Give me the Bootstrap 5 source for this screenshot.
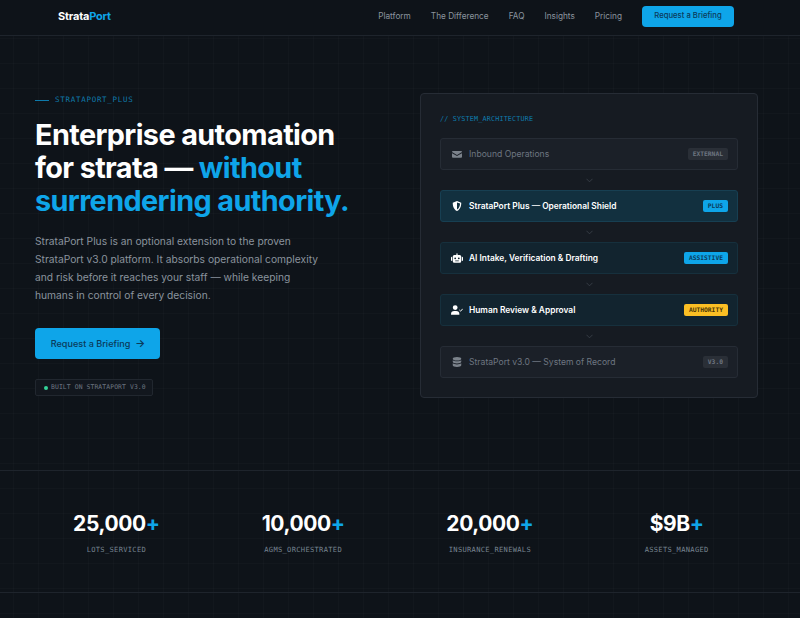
<!DOCTYPE html>
<html lang="en">
<head>
  <meta charset="UTF-8" />
  <meta name="viewport" content="width=device-width, initial-scale=1" />
  <title>StrataPort Plus</title>
  <link href="https://cdn.jsdelivr.net/npm/bootstrap@5.3.2/dist/css/bootstrap.min.css" rel="stylesheet" />
  <style>
    html, body { height: 100%; overflow: hidden; }
    body {
      font-family: 'Inter', sans-serif;
      color: #fff;
      background-color: #0e1319;
      background-image:
        linear-gradient(rgba(255,255,255,.016) 1px, transparent 1px),
        linear-gradient(90deg, rgba(255,255,255,.016) 1px, transparent 1px);
      background-size: 25px 25px;
      background-position: 13px 13px;
    }
    .mono { font-family: 'DejaVu Sans Mono', monospace; }
    /* nav */
    .top-nav { height: 36px; padding: 0 66px 3px 58px; border-bottom: 1px solid #1e242c; background: #0e1319; }
    .brand { font-size: 11px; font-weight: 700; color: #fff; letter-spacing: -.2px; }
    .accent { color: #0ea5e9; }
    .top-link { font-size: 8.25px; color: #8b949e; text-decoration: none; }
    .top-links { gap: 20px; }
    .btn-sky { background: #0ea5e9; color: #0b3a5a; border: 0; font-weight: 500; border-radius: 4px; }
    .btn-sky:hover { background: #0ea5e9; color: #0b3a5a; }
    .btn-nav { font-size: 7.7px; width: 92px; height: 21px; padding: 0; }
    /* hero */
    .hero-wrap { height: 434px; padding: 57px 42px 0 35px; gap: 62px; }
    .hero-left { width: 323px; flex-shrink: 0; }
    .eyebrow { font-size: 7.5px; letter-spacing: .72px; color: #0e7aab; height: 14px; }
    .eyebrow-rule { width: 14px; height: 1px; background: #0e7aab; margin-right: 6px; }
    .hero-title { font-size: 28.8px; line-height: 33px; font-weight: 700; letter-spacing: -.6px; margin: 11px 0 0; }
    .hero-copy { font-size: 10.25px; line-height: 18px; color: #8b949e; margin: 15px 0 0; width: 290px; }
    .btn-hero { font-size: 9.1px; width: 125px; height: 31px; margin-top: 24px; padding: 0 0 0 1px; }
    .btn-arrow { font-size: 10.5px; font-weight: 600; }
    .built-tag { margin-top: 20px; height: 17px; width: 118px; border: 1px solid #21272f; background: #12171e; border-radius: 2px; font-size: 6.4px; letter-spacing: .1px; color: #6e7681; padding-left: 8px; white-space: nowrap; }
    .dot-live { width: 4px; height: 4px; border-radius: 50%; background: #34d399; margin-right: 3px; flex-shrink: 0; }
    /* architecture card */
    .arch-card { width: 338px; height: 305px; background: #161b22; border: 1px solid #262c35; border-radius: 4px; padding: 20px 19px; }
    .arch-head { font-size: 6.8px; letter-spacing: .15px; color: #0e7aab; height: 10px; line-height: 10px; margin-bottom: 14px; }
    .arch-row { height: 32px; border-radius: 3px; padding: 0 9px 0 11px; font-size: 8.6px; border: 1px solid #262c35; background: #1b2028; color: #6e7681; }
    .arch-row.lit { background: #12303f; border-color: #173f52; color: #fff; font-weight: 600; font-size: 8.4px; }
    .arch-row.lit.soft { background: #12242f; border-color: #16303d; }
    .arch-row svg { width: 10px; height: 10px; margin-right: 7px; flex-shrink: 0; fill: currentColor; }
    .arch-row.dim svg { fill: #7b828b; }
    .arch-tag { margin-left: auto; font-size: 6.3px; font-weight: 700; padding: 0 5px; height: 12px; line-height: 12px; border-radius: 2px; }
    .tag-muted { background: #2a2f37; color: #6e7681; }
    .tag-sky { background: #0ea5e9; color: #0b3a5a; }
    .tag-gold { background: #fbbf24; color: #4a3505; }
    .arch-chev { height: 20px; color: #3a414a; }
    .arch-chev svg { width: 7px; height: 5px; }
    /* stats */
    .stat-band { height: 123px; padding: 0 30px 0 23px; border-top: 1px solid #1e242c; border-bottom: 1px solid #1e242c; }
    .stat-num { font-size: 21px; font-weight: 700; line-height: 28px; letter-spacing: -.4px; margin-top: 39px; }
    .stat-lab { font-size: 7.1px; letter-spacing: .3px; color: #768390; margin-top: 7px; }
  </style>
</head>
<body>
  <nav class="top-nav d-flex align-items-center justify-content-between">
    <a class="brand text-decoration-none" href="#">Strata<span class="accent">Port</span></a>
    <div class="d-flex align-items-center top-links">
      <a class="top-link" href="#">Platform</a>
      <a class="top-link" href="#">The Difference</a>
      <a class="top-link" href="#">FAQ</a>
      <a class="top-link" href="#">Insights</a>
      <a class="top-link" href="#">Pricing</a>
      <button class="btn btn-sky btn-nav">Request a Briefing</button>
    </div>
  </nav>

  <section class="hero-wrap d-flex">
    <div class="hero-left">
      <div class="eyebrow mono d-flex align-items-center"><span class="eyebrow-rule"></span>STRATAPORT_PLUS</div>
      <h1 class="hero-title">Enterprise automation<br>for strata — <span class="accent">without</span><br><span class="accent">surrendering authority.</span></h1>
      <p class="hero-copy">StrataPort Plus is an optional extension to the proven StrataPort v3.0 platform. It absorbs operational complexity and risk before it reaches your staff — while keeping humans in control of every decision.</p>
      <button class="btn btn-sky btn-hero d-block">Request a Briefing &nbsp;<span class="btn-arrow">→</span></button>
      <div class="built-tag mono d-flex align-items-center"><span class="dot-live"></span>BUILT ON STRATAPORT V3.0</div>
    </div>

    <div class="arch-card">
      <div class="arch-head mono">// SYSTEM_ARCHITECTURE</div>

      <div class="arch-row dim d-flex align-items-center">
        <svg viewBox="0 0 16 16"><path d="M1.5 3h13A1.5 1.5 0 0 1 16 4.5v.4L8 9.6 0 4.900V4.500A1.500 1.500 0 0 1 1.500 3zM0 6.600v5.900A1.500 1.500 0 0 0 1.500 14h13a1.500 1.500 0 0 0 1.500-1.500V6.600l-8 4.700z"/></svg>
        Inbound Operations<span class="arch-tag tag-muted mono">EXTERNAL</span>
      </div>
      <div class="arch-chev d-flex align-items-center justify-content-center"><svg viewBox="0 0 8 5"><path d="M.5.500 4 4 7.500.500" fill="none" stroke="currentColor"/></svg></div>

      <div class="arch-row lit d-flex align-items-center">
        <svg viewBox="0 0 16 16"><path fill-rule="evenodd" d="M8 0l6.800 2.600c0 5.500-1.500 10.600-6.800 13.400C2.700 13.200 1.200 8.100 1.200 2.600zM8 2.300v11.300c3.500-2.100 4.700-5.700 4.900-9.700z"/></svg>
        StrataPort Plus — Operational Shield<span class="arch-tag tag-sky mono">PLUS</span>
      </div>
      <div class="arch-chev d-flex align-items-center justify-content-center"><svg viewBox="0 0 8 5"><path d="M.5.500 4 4 7.500.500" fill="none" stroke="currentColor"/></svg></div>

      <div class="arch-row lit soft d-flex align-items-center">
        <svg viewBox="0 0 20 16" style="width:12px;margin-left:-1px;margin-right:6px"><path fill-rule="evenodd" d="M10 0a1 1 0 0 1 1 1v2h3.500A2.500 2.500 0 0 1 17 5.500v8a2.500 2.500 0 0 1-2.500 2.500h-9A2.500 2.500 0 0 1 3 13.500v-8A2.500 2.500 0 0 1 5.500 3H9V1a1 1 0 0 1 1-1zM7 7a1.500 1.500 0 1 0 0 3 1.500 1.500 0 0 0 0-3zm6 0a1.500 1.500 0 1 0 0 3 1.500 1.500 0 0 0 0-3zM7 12v1.500h6V12z"/><path d="M0 7.500A1.500 1.500 0 0 1 1.500 6H2v7h-.5A1.500 1.500 0 0 1 0 11.500zM20 7.500A1.500 1.500 0 0 0 18.500 6H18v7h.5a1.500 1.500 0 0 0 1.500-1.500z"/></svg>
        AI Intake, Verification &amp; Drafting<span class="arch-tag tag-sky mono">ASSISTIVE</span>
      </div>
      <div class="arch-chev d-flex align-items-center justify-content-center"><svg viewBox="0 0 8 5"><path d="M.5.500 4 4 7.500.500" fill="none" stroke="currentColor"/></svg></div>

      <div class="arch-row lit soft d-flex align-items-center">
        <svg viewBox="0 0 20 16" style="width:12px;margin-left:-1px;margin-right:6px"><path d="M7 8a4 4 0 1 0 0-8 4 4 0 0 0 0 8zM5.500 9.500A5.500 5.500 0 0 0 0 15a1 1 0 0 0 1 1h12a1 1 0 0 0 1-1 5.500 5.500 0 0 0-5.500-5.500z"/><path d="M14 8l2 2 3.500-4" fill="none" stroke="currentColor" stroke-width="1.600"/></svg>
        Human Review &amp; Approval<span class="arch-tag tag-gold mono">AUTHORITY</span>
      </div>
      <div class="arch-chev d-flex align-items-center justify-content-center"><svg viewBox="0 0 8 5"><path d="M.5.500 4 4 7.500.500" fill="none" stroke="currentColor"/></svg></div>

      <div class="arch-row dim d-flex align-items-center">
        <svg viewBox="0 0 16 16"><ellipse cx="8" cy="2.800" rx="6.800" ry="2.800"/><path d="M1.200 5v2.500C1.200 9 4.200 10.300 8 10.300s6.800-1.300 6.800-2.800V5c-1.500 1.200-4 1.800-6.800 1.800S2.700 6.200 1.200 5zM1.200 10v3.200C1.200 14.700 4.200 16 8 16s6.800-1.300 6.800-2.800V10c-1.500 1.200-4 1.800-6.800 1.800S2.700 11.200 1.200 10z"/></svg>
        StrataPort v3.0 — System of Record<span class="arch-tag tag-muted mono">V3.0</span>
      </div>
    </div>
  </section>

  <section class="stat-band row g-0 text-center">
    <div class="col-3"><div class="stat-num">25,000<span class="accent">+</span></div><div class="stat-lab mono">LOTS_SERVICED</div></div>
    <div class="col-3"><div class="stat-num">10,000<span class="accent">+</span></div><div class="stat-lab mono">AGMS_ORCHESTRATED</div></div>
    <div class="col-3"><div class="stat-num">20,000<span class="accent">+</span></div><div class="stat-lab mono">INSURANCE_RENEWALS</div></div>
    <div class="col-3"><div class="stat-num">$9B<span class="accent">+</span></div><div class="stat-lab mono">ASSETS_MANAGED</div></div>
  </section>
</body>
</html>
